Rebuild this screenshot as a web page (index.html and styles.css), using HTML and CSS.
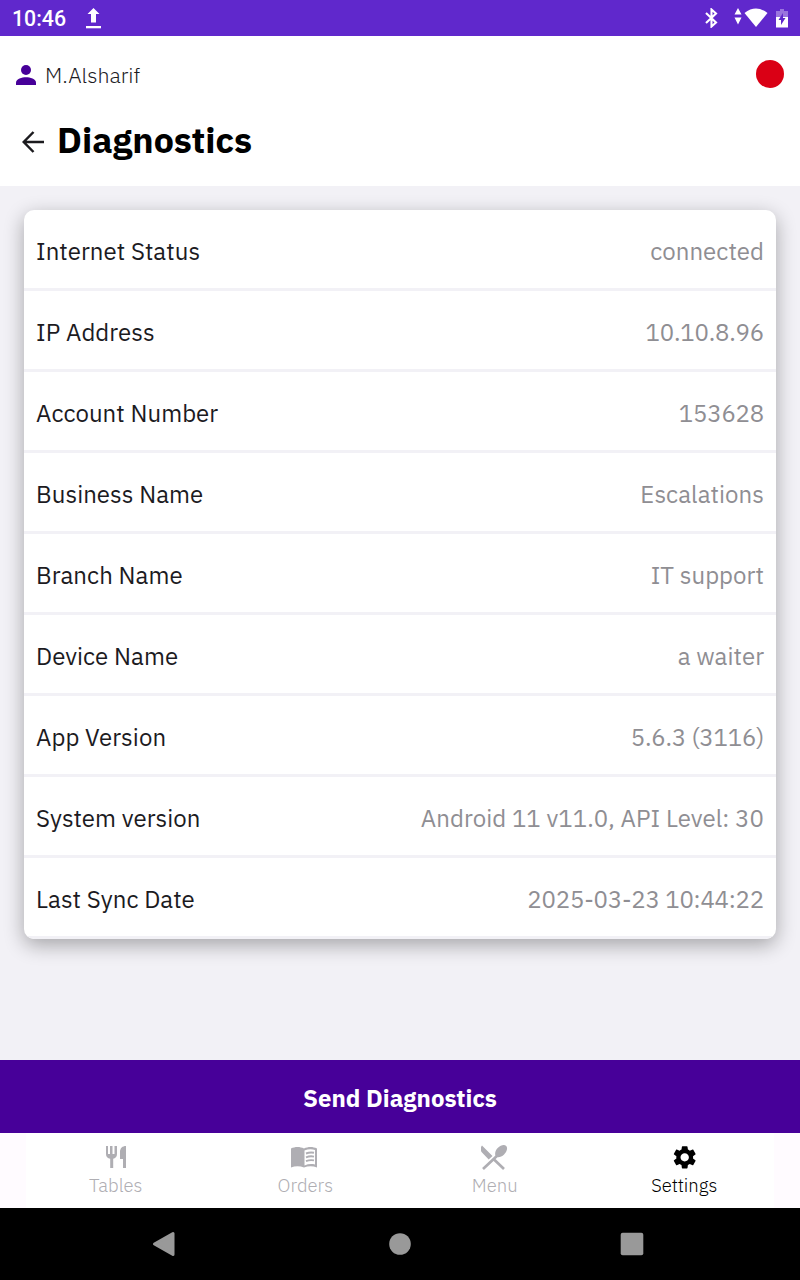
FILE: index.html
```html
<!DOCTYPE html>
<html lang="en">
<head>
  <meta charset="UTF-8">
  <meta name="viewport" content="width=device-width, initial-scale=1.0">
  <title>Diagnostics</title>
  <link rel="stylesheet" href="styles.css">
</head>
<body>
  <div class="status-bar">
    <span class="clock">10:46</span>
    <svg class="upload" width="16" height="21" viewBox="0 0 16 21"><path d="M7.500 0L13.500 6H10V14.500H5V6H1.500z" fill="#fff"/><path d="M0 18H15V20.300H0z" fill="#fff"/></svg>
    <div class="status-icons">
      <svg width="13" height="20" viewBox="0 0 13 20"><path d="M1 5L11 14.500 6.500 18.500V1.500L11 5.500 1 15" fill="none" stroke="#fff" stroke-width="2.100"/></svg>
      <svg class="traffic" width="8" height="17" viewBox="0 0 8 17"><path d="M4 0L7.500 6.500H.5zM4 16.500L.5 9.500H7.500z" fill="#fff"/></svg>
      <svg class="wifi" width="24" height="20" viewBox="0 0 24 20"><path d="M.5 5Q12-3.800 23.500 5L12 19z" fill="#fff"/></svg>
      <svg class="battery" width="12" height="19" viewBox="0 0 12 19"><path d="M4 0H8V2H12V9H0V2H4z" fill="#9a74de"/><path d="M0 8H12V18.500H0z" fill="#fff"/><path d="M7 4V9H9.500L5 16V11H2.500z" fill="#6028cc"/></svg>
    </div>
  </div>

  <div class="header">
    <div class="user-row">
      <svg width="20" height="20" viewBox="0 0 20 20"><circle cx="10" cy="5" r="5" fill="#470099"/><path d="M0 20V17.500C0 14 6 12.300 10 12.300S20 14 20 17.500V20z" fill="#470099"/></svg>
      <span class="user-name">M.Alsharif</span>
      <span class="dot"></span>
    </div>
    <div class="title-row">
      <svg width="22" height="22" viewBox="0 0 22 22"><path d="M11.500 1L1.700 11 11.500 21M1.700 11H22" fill="none" stroke="#1c1b1f" stroke-width="2.500"/></svg>
      <h1>Diagnostics</h1>
    </div>
  </div>

  <div class="content">
    <div class="card">
      <div class="row"><span class="label">Internet Status</span><span class="value">connected</span></div>
      <div class="row"><span class="label">IP Address</span><span class="value number">10.10.8.96</span></div>
      <div class="row"><span class="label">Account Number</span><span class="value number">153628</span></div>
      <div class="row"><span class="label">Business Name</span><span class="value">Escalations</span></div>
      <div class="row"><span class="label">Branch Name</span><span class="value">IT support</span></div>
      <div class="row"><span class="label">Device Name</span><span class="value">a waiter</span></div>
      <div class="row"><span class="label">App Version</span><span class="value number">5.6.3 (3116)</span></div>
      <div class="row"><span class="label">System version</span><span class="value">Android 11 v11.0, API Level: 30</span></div>
      <div class="row"><span class="label">Last Sync Date</span><span class="value number">2025-03-23 10:44:22</span></div>
    </div>
  </div>

  <button class="send">Send Diagnostics</button>

  <div class="tabs">
    <div class="tab">
      <svg width="28" height="28" viewBox="0 0 28 28"><path d="M4 3H6V11H8V3H10.500V11H12.500V3H15V11C15 14 13.300 15.200 11.200 15.700V25H8.200V15.700C5.700 15.200 4 14 4 11zM24 3V25H21V16H18V9C18 5 20.500 3 24 3z"/></svg>
      <span>Tables</span>
    </div>
    <div class="tab">
      <svg width="28" height="28" viewBox="1 0 28 28"><path d="M1 5.500C5 3.500 10 3.500 14 5.500 18 3.500 23 3.500 27 5.500V24.500C23 22.700 18 22.700 14 24.500 10 22.700 5 22.700 1 24.500z"/><path d="M14.500 7.500C18 6 22 6 25 7V21.500C21.500 20.700 18 20.900 14.500 22.500z" fill="#fff"/><path d="M16 10.500Q20 9 24 9.800M16 14.300Q20 12.800 24 13.600M16 18.100Q20 16.600 24 17.400" fill="none" stroke="#afaeb3" stroke-width="1.900"/></svg>
      <span>Orders</span>
    </div>
    <div class="tab">
      <svg width="28" height="28" viewBox="1.500 0 28 28"><path d="M2.500 2.500L13 13 9.200 16.500 2.500 9.500C.5 7.500.8 4.500 2.500 2.500z"/><path d="M16.800 13.800C14.900 12 15.400 7.800 18.200 5 21.300 2 25 1.300 26.700 3.100 28.500 4.900 27.500 8.600 24.600 11.600 22 14.100 18.700 14.900 16.800 13.800z"/><path d="M19 11.500L3.500 26M13.500 15.500L24.500 26" fill="none" stroke="#afaeb3" stroke-width="2.700"/></svg>
      <span>Menu</span>
    </div>
    <div class="tab active">
      <svg width="30" height="30" viewBox="-.6 -.3 24 24"><path d="M19.140 12.940c.04-.3.060-.61.060-.94 0-.32-.02-.64-.07-.94l2.030-1.580c.18-.14.230-.41.120-.61l-1.920-3.320c-.12-.22-.37-.29-.59-.22l-2.390.96c-.5-.38-1.030-.7-1.620-.94l-.36-2.540c-.04-.24-.24-.41-.48-.41h-3.840c-.24 0-.43.17-.47.41l-.36 2.540c-.59.24-1.130.57-1.620.94l-2.390-.96c-.22-.08-.47 0-.59.22L2.740 8.870c-.12.210-.08.470.12.610l2.030 1.580c-.05.3-.09.63-.09.94s.02.640.070.940l-2.030 1.580c-.18.14-.23.41-.12.610l1.920 3.320c.12.220.370.290.590.220l2.390-.96c.5.380 1.030.7 1.620.94l.36 2.540c.05.240.240.410.480.410h3.840c.24 0 .44-.17.470-.41l.36-2.540c.59-.24 1.130-.56 1.620-.94l2.390.96c.22.080.470 0 .59-.22l1.920-3.320c.12-.22.070-.47-.12-.61l-2.010-1.580zM12 15.600c-1.980 0-3.600-1.620-3.600-3.600s1.620-3.600 3.600-3.600 3.600 1.620 3.600 3.600-1.620 3.600-3.600 3.600z"/></svg>
      <span>Settings</span>
    </div>
  </div>

  <div class="nav-bar">
    <svg width="24" height="26" viewBox="0 0 24 26"><path d="M21 2.500V23.500L2.500 13z" fill="#999" stroke="#999" stroke-width="3" stroke-linejoin="round"/></svg>
    <svg width="22" height="22" viewBox="0 0 22 22"><circle cx="11" cy="11" r="10.800" fill="#999"/></svg>
    <svg width="24" height="24" viewBox="0 0 24 24"><rect x=".7" y=".7" width="22.600" height="22.600" rx="2" fill="#999"/></svg>
  </div>
</body>
</html>
```

FILE: styles.css
```css
* {
  box-sizing: border-box;
}
body {
  margin: 0;
  height: 1280px;
  display: flex;
  flex-direction: column;
  font-family: "IBM Plex Sans", "Noto Sans", sans-serif;
  background: #f2f1f6;
  color: #1c1b1f;
}
svg {
  display: block;
  flex: none;
}

/* Status bar */
.status-bar {
  height: 36px;
  background: #6028cc;
  color: #fff;
  display: flex;
  align-items: center;
  padding: 0 12px;
}
.clock {
  font-family: Roboto, sans-serif;
  font-size: 21.3px;
  font-weight: 500;
  width: 74px;
  padding-top: 1px;
}
.upload {
  margin-top: 1px;
}
.status-icons {
  margin-left: auto;
  display: flex;
  align-items: center;
}
.traffic {
  margin: -4px 2px 0 16px;
}
.battery {
  margin-left: 8px;
}

/* Header */
.header {
  height: 150px;
  background: #fff;
  padding: 20px 16px 0;
}
.user-row {
  height: 36px;
  display: flex;
  align-items: center;
}
.user-row svg {
  margin-top: 1px;
}
.user-name {
  margin-left: 9px;
  padding-top: 2px;
  font-size: 21.4px;
  font-weight: 300;
}
.dot {
  width: 28px;
  height: 28px;
  margin-left: auto;
  border-radius: 50%;
  background: #da0015;
}
.title-row {
  display: flex;
  align-items: center;
  height: 56px;
  margin-top: 22px;
  padding-left: 6px;
}
h1 {
  margin: 0 0 0 13px;
  padding-bottom: 6px;
  font-size: 35.8px;
  font-weight: 700;
  color: #000;
}

/* Diagnostics list */
.content {
  flex: 1;
  padding: 24px;
}
.card {
  background: #fff;
  border-radius: 10px;
  overflow: hidden;
  box-shadow: 0 6px 20px rgba(0, 0, 0, 0.32);
}
.row {
  display: flex;
  justify-content: space-between;
  align-items: center;
  height: 81px;
  padding: 4px 12px 0;
  border-bottom: 3px solid #f2f1f6;
  font-size: 24px;
  letter-spacing: 0.05px;
}
.value {
  color: #8f8e93;
}
.number {
  letter-spacing: -0.2px;
}

.send {
  height: 73px;
  border: none;
  background: #470099;
  color: #fff;
  font-family: inherit;
  font-size: 24px;
  font-weight: 700;
  padding: 2px 0 0;
}

/* Bottom tabs */
.tabs {
  height: 75px;
  background: linear-gradient(#fff, #fff) center / 748px 100% no-repeat #fffbff;
  padding: 10px 21px 0;
  display: grid;
  grid-template-columns: repeat(4, 1fr);
}
.tab {
  display: flex;
  flex-direction: column;
  align-items: center;
  font-size: 18.5px;
  font-weight: 300;
  line-height: 28px;
  color: #afaeb3;
  fill: #afaeb3;
}
.tab svg {
  height: 28px;
}
.tab.active {
  color: #000;
  fill: #000;
}

/* Android navigation */
.nav-bar {
  height: 72px;
  background: #000;
  display: flex;
  align-items: center;
  justify-content: space-between;
  padding: 0 156px 0 152px;
}
.nav-bar svg:nth-child(2) {
  margin-left: 4px;
}
```
